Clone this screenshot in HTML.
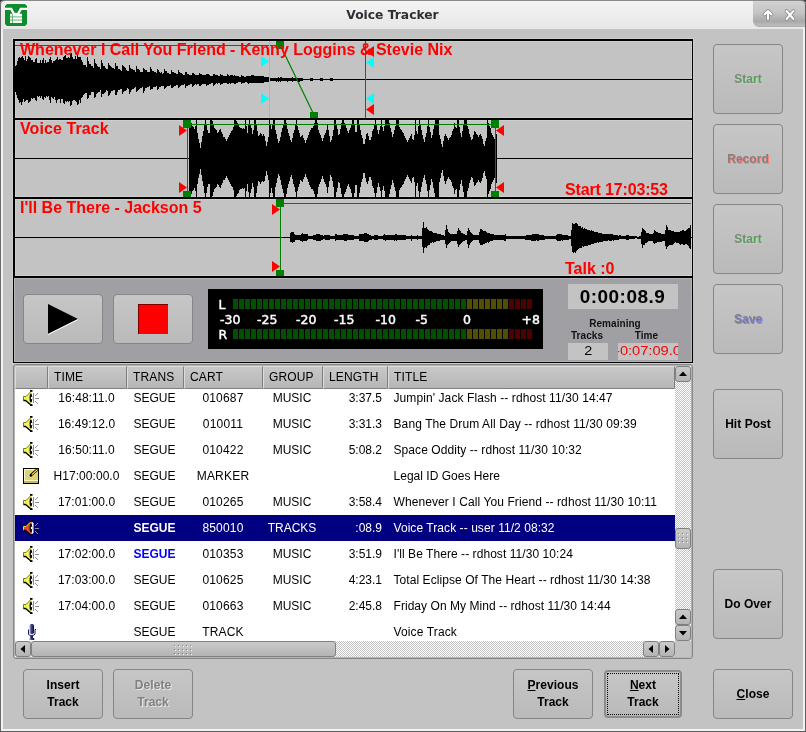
<!DOCTYPE html><html><head><meta charset="utf-8"><title>Voice Tracker</title><style>
*{box-sizing:border-box;margin:0;padding:0}
html,body{width:806px;height:732px;overflow:hidden;background:#c3c3c3;font-family:"Liberation Sans",sans-serif;}
#win{position:absolute;left:0;top:0;width:806px;height:732px;overflow:hidden;will-change:transform}
.abs{position:absolute}
.btn{position:absolute;border:1px solid #868686;border-radius:4px;background:linear-gradient(#c6c6c6,#bababa);display:flex;align-items:center;justify-content:center;text-align:center;font-weight:bold;font-size:12px;line-height:17px;color:#000;letter-spacing:0.05px}
.dis{color:#808080}
.t{position:absolute;white-space:nowrap}
.red{color:#ff0000;font-weight:bold;font-size:16px;line-height:16px}
.row{position:absolute;height:26px;font-size:12px;line-height:26px;color:#000}
.row .t{top:0}
.hd{position:absolute;top:0;height:23px;border:1px solid #7e7e7e;border-top-color:#dcdcdc;border-left-color:#dcdcdc;border-radius:2px;background:linear-gradient(#c8c8c8,#b6b6b6);font-size:12px;line-height:20px;padding-left:5px;letter-spacing:0.15px;color:#000}
.sb{border:1px solid #808080;border-radius:3px;background:linear-gradient(#cacaca,#b4b4b4)}
</style></head><body><div id="win">
<div class="abs" style="left:0;top:0;width:806px;height:29px;background:linear-gradient(#f4f4f4,#ececec 60%,#e6e6e6);"></div>
<div class="abs" style="left:0;top:0;width:806px;height:1px;background:#8a8a8a"></div>
<div class="t" style="left:0;width:785px;top:7px;text-align:center;font-family:'DejaVu Sans',sans-serif;font-weight:bold;font-size:12.3px;line-height:16px;color:#2c3034;letter-spacing:0px">Voice Tracker</div>
<div class="abs" style="left:753px;top:1px;width:52px;height:26px;border-bottom-left-radius:6px;background:linear-gradient(#d2d2d2,#c4c4c4 45%,#a9a9a9 78%,#bcbcbc 96%,#a4a4a4)"></div>
<svg class="abs" style="left:753px;top:1px" width="50" height="26" viewBox="0 0 50 26"><g fill="none" stroke="#8a8a8a" stroke-width="3.6" stroke-linecap="round" stroke-linejoin="round"><path d="M15 18V10.5M11.5 13.5L15 10l3.5 3.5"/><path d="M33.5 10l7 8M40.500 10l-7 8"/></g><g fill="none" stroke="#fff" stroke-width="2" stroke-linecap="round" stroke-linejoin="round"><path d="M15 18V10.5M11.500 13.500L15 10l3.500 3.500"/><path d="M33.500 10l7 8M40.500 10l-7 8"/></g></svg>
<svg class="abs" style="left:0;top:0" width="32" height="30" viewBox="0 0 32 30"><path d="M7 4H25L27 6V24L25 26H7L5 24V6Z" fill="#0e8c2e"/><path d="M5 8.900H11.200L14 14H18L20.800 8.900H27" fill="none" stroke="#fff" stroke-width="2.300"/><rect x="10" y="13.800" width="12" height="9.200" fill="#fff"/><path d="M10 16.900H22M10 20H22M12.400 14V23" stroke="#3aa552" stroke-width="0.800" fill="none"/><path d="M12.300 5H19.700L16 13.300Z" fill="#0e8c2e"/></svg>
<div class="abs" style="left:0;top:3px;width:1px;height:729px;background:#6a6a6a"></div>
<div class="abs" style="left:1px;top:29px;width:2px;height:702px;background:#f2f2f2"></div>
<div class="abs" style="left:803px;top:27px;width:2px;height:704px;background:#f2f2f2"></div>
<div class="abs" style="left:805px;top:3px;width:1px;height:729px;background:#5e5e5e"></div>
<div class="abs" style="left:1px;top:729px;width:804px;height:2px;background:#f2f2f2"></div>
<div class="abs" style="left:0;top:731px;width:806px;height:1px;background:#5e5e5e"></div>
<svg class="abs" style="left:0;top:0" width="806" height="6" viewBox="0 0 806 6"><path d="M0 0H5Q0 0 0 5Z" fill="#3a3a3a"/><path d="M806 0H801Q806 0 806 5Z" fill="#3a3a3a"/><path d="M0.500 5Q0.500 0.500 5 0.500" fill="none" stroke="#777" stroke-width="1"/><path d="M805.500 5Q805.500 0.500 801 0.500" fill="none" stroke="#777" stroke-width="1"/></svg>
<svg class="abs" style="left:0;top:0" width="806" height="290" viewBox="0 0 806 290" shape-rendering="crispEdges">
<rect x="12" y="38" width="682" height="1" fill="#cecece"/>
<rect x="12" y="38" width="1" height="326" fill="#cecece"/>
<rect x="693" y="38" width="1" height="326" fill="#cecece"/>
<rect x="13" y="39" width="680" height="2" fill="#000"/>
<rect x="13" y="118" width="680" height="2" fill="#000"/>
<rect x="13" y="197" width="680" height="2" fill="#000"/>
<rect x="13" y="276" width="680" height="2" fill="#000"/>
<rect x="15" y="41" width="677" height="1" fill="#cecece"/>
<rect x="15" y="117" width="677" height="1" fill="#cecece"/>
<rect x="15" y="120" width="677" height="1" fill="#cecece"/>
<rect x="15" y="196" width="677" height="1" fill="#cecece"/>
<rect x="15" y="199" width="677" height="1" fill="#cecece"/>
<rect x="15" y="275" width="677" height="1" fill="#cecece"/>
<rect x="15" y="41" width="1" height="235" fill="#cecece"/>
<rect x="691" y="41" width="1" height="235" fill="#cecece"/>
<rect x="13" y="39" width="2" height="239" fill="#000"/>
<rect x="692" y="39" width="1" height="239" fill="#000"/>
<rect x="15" y="118" width="677" height="2" fill="#000"/>
<rect x="15" y="197" width="677" height="2" fill="#000"/>
<rect x="15" y="79" width="677" height="1" fill="#000"/>
<rect x="15" y="158" width="677" height="1" fill="#000"/>
<rect x="15" y="237" width="677" height="1" fill="#000"/>
<path d="M15.5 66V92M16.5 65V95M17.5 61V98M18.5 58V100M19.5 57V103M20.5 58V102M21.5 57V105M22.5 56V102M23.5 58V99M24.5 60V102M25.5 56V101M26.5 61V100M27.5 59V100M28.5 56V103M29.5 57V102M30.5 58V101M31.5 60V98M32.5 60V99M33.5 62V98M34.5 62V98M35.5 59V100M36.5 58V101M37.5 63V96M38.5 63V97M39.5 63V96M40.5 60V98M41.5 63V96M42.5 60V99M43.5 58V100M44.5 63V97M45.5 60V98M46.5 63V96M47.5 62V97M48.5 62V96M49.5 59V100M50.5 57V103M51.5 60V97M52.5 63V98M53.5 61V99M54.5 61V97M55.5 60V100M56.5 59V103M57.5 57V100M58.5 60V99M59.5 59V99M60.5 59V103M61.5 60V99M62.5 60V99M63.5 57V103M64.5 56V104M65.5 55V101M66.5 58V102M67.5 58V101M68.5 57V102M69.5 58V101M70.5 54V106M71.5 53V105M72.5 57V101M73.5 59V100M74.5 59V100M75.5 56V101M76.5 59V102M77.5 54V105M78.5 57V104M79.5 57V100M80.5 57V103M81.5 60V98M82.5 62V97M83.5 65V95M84.5 65V94M85.5 65V93M86.5 67V93M87.5 57V99M88.5 61V98M89.5 64V95M90.5 64V95M91.5 66V92M92.5 66V92M93.5 68V92M94.5 59V98M95.5 63V97M96.5 64V94M97.5 66V93M98.5 67V92M99.5 67V92M100.5 69V90M101.5 60V97M102.5 63V94M103.5 66V94M104.5 66V93M105.5 68V92M106.5 69V90M107.5 69V91M108.5 63V96M109.5 65V95M110.5 66V93M111.5 67V91M112.5 68V91M113.5 68V90M114.5 69V90M115.5 63V95M116.5 66V95M117.5 66V92M118.5 69V90M119.5 69V90M120.5 70V89M121.5 71V89M122.5 65V94M123.5 66V92M124.5 67V91M125.5 68V91M126.5 70V90M127.5 71V88M128.5 71V89M129.5 65V94M130.5 68V92M131.5 69V90M132.5 69V89M133.5 70V89M134.5 70V88M135.5 72V87M136.5 66V92M137.5 69V91M138.5 69V90M139.5 70V89M140.5 72V88M141.5 72V88M142.5 72V87M143.5 68V93M144.5 69V91M145.5 70V88M146.5 70V88M147.5 72V87M148.5 72V87M149.5 72V86M150.5 67V90M151.5 69V89M152.5 71V89M153.5 71V87M154.5 72V87M155.5 72V87M156.5 73V86M157.5 69V90M158.5 70V89M159.5 72V87M160.5 73V87M161.5 72V86M162.5 74V86M163.5 73V86M164.5 69V89M165.5 71V88M166.5 71V87M167.5 73V86M168.5 73V86M169.5 74V86M170.5 74V85M171.5 70V88M172.5 72V88M173.5 72V87M174.5 73V86M175.5 73V86M176.5 74V85M177.5 74V85M178.5 70V88M179.5 72V87M180.5 73V86M181.5 73V85M182.5 74V85M183.5 75V85M184.5 75V84M185.5 72V88M186.5 72V86M187.5 74V86M188.5 74V85M189.5 75V85M190.5 75V84M191.5 75V84M192.5 73V87M193.5 73V86M194.5 74V85M195.5 75V84M196.5 75V85M197.5 75V84M198.5 75V84M199.5 73V86M200.5 74V86M201.5 74V85M202.5 75V84M203.5 75V84M204.5 75V84M205.5 75V84M206.5 74V86M207.5 74V85M208.5 74V85M209.5 75V84M210.5 76V84M211.5 76V83M212.5 76V83M213.5 74V86M214.5 74V85M215.5 75V84M216.5 75V83M217.5 75V84M218.5 76V83M219.5 76V83M220.5 74V85M221.5 75V84M222.5 75V84M223.5 76V83M224.5 76V83M225.5 76V83M226.5 76V83M227.5 74V84M228.5 75V84M229.5 76V83M230.5 75V84M231.5 75V83M232.5 75V83M233.5 76V83M234.5 75V84M235.5 76V84M236.5 76V83M237.5 76V83M238.5 76V82M239.5 77V82M240.5 77V82M241.5 75V84M242.5 76V83M243.5 76V83M244.5 77V83M245.5 77V82M246.5 76V82M247.5 76V83M248.5 76V84M249.5 76V83M250.5 76V83M251.5 75V83M252.5 75V83M253.5 75V83M254.5 76V83M255.5 76V83M256.5 76V83M257.5 76V83M258.5 76V83M259.5 76V83M260.5 76V83M261.5 76V83M262.5 76V83M263.5 76V83M264.5 77V82M265.5 77V82M266.5 77V82M267.5 77V82M268.5 77V82M269.5 78V81M270.5 78V81M271.5 78V81M272.5 78V81M273.5 78V81M274.5 78V81M275.5 78V81M276.5 78V82M277.5 78V81M278.5 77V82M279.5 78V81M280.5 77V82M281.5 77V81M282.5 78V81M283.5 78V81M284.5 78V81M285.5 78V81M286.5 78V81M287.5 78V82M288.5 78V81M289.5 78V81M290.5 78V81M291.5 78V81M292.5 77V82M293.5 78V81M294.5 78V81M295.5 78V81M296.5 78V81M297.5 78V81M298.5 78V82M299.5 78V82M300.5 78V81M301.5 78V81M302.5 78V81M310.5 78V81M311.5 78V81M312.5 78V81M320.5 78V81M321.5 78V81M322.5 78V81M330.5 78V81M331.5 78V81M332.5 78V81" stroke="#000" stroke-width="1" fill="none"/>
<path d="M189.5 120V197M190.5 121V196M191.5 123V194M192.5 126V191M193.5 127V190M194.5 129V188M195.5 126V191M196.5 120V197M197.5 133V184M198.5 139V178M199.5 143V174M200.5 148V169M201.5 142V175M202.5 136V181M203.5 131V186M204.5 124V193M205.5 120V197M206.5 124V193M207.5 130V187M208.5 133V184M209.5 133V184M210.5 120V197M211.5 120V197M212.5 121V196M213.5 125V192M214.5 128V189M215.5 129V188M216.5 130V187M217.5 133V184M218.5 132V185M219.5 130V187M220.5 129V188M221.5 132V185M222.5 134V183M223.5 137V180M224.5 137V180M225.5 139V178M226.5 141V176M227.5 139V178M228.5 137V180M229.5 135V182M230.5 133V184M231.5 131V186M232.5 130V187M233.5 127V190M234.5 120V197M235.5 120V197M236.5 121V196M237.5 123V194M238.5 124V193M239.5 127V190M240.5 128V189M241.5 128V189M242.5 129V188M243.5 128V189M244.5 129V188M245.5 120V197M246.5 126V191M247.5 133V184M248.5 125V192M249.5 120V197M250.5 124V193M251.5 128V189M252.5 134V183M253.5 130V187M254.5 120V197M255.5 120V197M256.5 124V193M257.5 131V186M258.5 136V181M259.5 135V182M260.5 133V184M261.5 134V182M262.5 136V181M263.5 134V182M264.5 136V181M265.5 141V176M266.5 146V171M267.5 142V175M268.5 137V180M269.5 120V197M270.5 124V193M271.5 129V188M272.5 124V193M273.5 120V197M274.5 120V197M275.5 130V187M276.5 134V183M277.5 139V178M278.5 143V174M279.5 141V176M280.5 137V180M281.5 132V185M282.5 128V189M283.5 124V193M284.5 120V197M285.5 120V197M286.5 123V194M287.5 129V188M288.5 133V184M289.5 136V181M290.5 140V177M291.5 142V175M292.5 138V179M293.5 133V184M294.5 130V187M295.5 125V192M296.5 120V197M297.5 126V191M298.5 130V187M299.5 133V184M300.5 137V180M301.5 136V181M302.5 135V182M303.5 138V179M304.5 140V177M305.5 143V174M306.5 140V177M307.5 138V179M308.5 135V182M309.5 132V185M310.5 130V187M311.5 128V189M312.5 128V189M313.5 126V191M314.5 123V194M315.5 120V197M316.5 120V197M317.5 123V194M318.5 130V187M319.5 133V184M320.5 135V182M321.5 138V179M322.5 141V176M323.5 138V179M324.5 135V182M325.5 133V184M326.5 130V187M327.5 124V193M328.5 130V187M329.5 136V181M330.5 142V175M331.5 140V177M332.5 136V181M333.5 130V187M334.5 120V197M335.5 120V197M336.5 125V192M337.5 129V188M338.5 135V182M339.5 134V183M340.5 129V188M341.5 123V194M342.5 120V197M343.5 120V197M344.5 123V194M345.5 125V192M346.5 128V189M347.5 131V186M348.5 133V184M349.5 130V187M350.5 128V189M351.5 124V193M352.5 120V197M353.5 120V197M354.5 124V193M355.5 132V185M356.5 132V185M357.5 120V197M358.5 120V197M359.5 124V193M360.5 130V187M361.5 135V182M362.5 138V179M363.5 144V173M364.5 144V173M365.5 139V178M366.5 134V182M367.5 133V184M368.5 136V181M369.5 140V177M370.5 140V177M371.5 137V180M372.5 131V186M373.5 129V188M374.5 124V193M375.5 120V197M376.5 124V193M377.5 130V187M378.5 134V183M379.5 130V187M380.5 126V191M381.5 120V197M382.5 127V190M383.5 131V186M384.5 126V191M385.5 120V197M386.5 120V197M387.5 120V197M388.5 120V197M389.5 123V194M390.5 128V189M391.5 132V185M392.5 137V180M393.5 134V183M394.5 130V187M395.5 126V191M396.5 120V197M397.5 120V197M398.5 120V197M399.5 127V190M400.5 129V188M401.5 130V187M402.5 132V185M403.5 133V184M404.5 136V181M405.5 138V179M406.5 140V177M407.5 142V175M408.5 140V177M409.5 138V179M410.5 136V181M411.5 134V183M412.5 139V178M413.5 140V177M414.5 135V182M415.5 120V197M416.5 131V186M417.5 134V183M418.5 126V191M419.5 120V197M420.5 125V192M421.5 130V187M422.5 135V182M423.5 139V178M424.5 142V175M425.5 137V180M426.5 133V184M427.5 126V191M428.5 120V197M429.5 127V190M430.5 132V185M431.5 138V179M432.5 135V182M433.5 129V188M434.5 124V193M435.5 120V197M436.5 120V197M437.5 120V197M438.5 120V197M439.5 135V182M440.5 139V178M441.5 144V173M442.5 147V170M443.5 141V176M444.5 136V181M445.5 134V184M446.5 136V181M447.5 138V179M448.5 140V177M449.5 138V179M450.5 137V180M451.5 135V182M452.5 131V186M453.5 129V188M454.5 123V194M455.5 127V190M456.5 128V189M457.5 120V197M458.5 120V197M459.5 127V190M460.5 133V184M461.5 137V180M462.5 131V186M463.5 125V192M464.5 120V197M465.5 120V197M466.5 120V197M467.5 126V191M468.5 129V188M469.5 134V183M470.5 137V180M471.5 140V177M472.5 139V178M473.5 135V182M474.5 131V186M475.5 132V185M476.5 134V183M477.5 135V182M478.5 137V180M479.5 135V182M480.5 134V183M481.5 136V181M482.5 139V178M483.5 144V173M484.5 146V171M485.5 141V176M486.5 138V179M487.5 120V197M488.5 123V194M489.5 126V191M490.5 128V189M491.5 133V184M492.5 135V182M493.5 137V180M494.5 139V178M495.5 136V181M496.5 134V183" stroke="#000" stroke-width="1" fill="none"/>
<path d="M290.5 233V242M291.5 232V242M292.5 232V243M293.5 232V242M294.5 234V242M295.5 235V240M296.5 235V240M297.5 235V240M298.5 235V240M299.5 235V240M300.5 235V241M301.5 234V241M302.5 233V242M303.5 234V241M304.5 234V241M305.5 234V241M306.5 234V241M307.5 234V240M308.5 236V239M309.5 236V239M310.5 236V239M311.5 236V239M312.5 236V239M313.5 235V240M314.5 235V240M315.5 235V240M316.5 234V241M317.5 234V241M318.5 234V241M319.5 234V241M320.5 235V241M321.5 235V240M322.5 235V240M323.5 236V239M324.5 235V239M325.5 235V240M326.5 235V240M327.5 235V240M328.5 235V240M329.5 235V240M330.5 236V239M331.5 236V239M332.5 236V239M333.5 236V239M334.5 236V239M335.5 234V241M336.5 234V240M337.5 235V240M338.5 235V240M339.5 235V240M340.5 235V240M341.5 235V240M342.5 235V240M343.5 234V240M344.5 234V241M345.5 234V241M346.5 234V241M347.5 234V240M348.5 235V240M349.5 235V240M350.5 235V240M351.5 235V240M352.5 235V240M353.5 235V240M354.5 236V239M355.5 236V239M356.5 236V239M357.5 236V239M358.5 236V239M359.5 234V241M360.5 234V241M361.5 234V241M362.5 234V241M363.5 234V241M364.5 233V242M365.5 233V242M366.5 233V242M367.5 234V242M368.5 234V241M369.5 235V240M370.5 235V240M371.5 236V240M372.5 236V239M373.5 236V239M374.5 235V240M375.5 235V240M376.5 235V240M377.5 235V240M378.5 236V239M379.5 236V239M380.5 236V239M381.5 236V239M382.5 236V239M383.5 235V240M384.5 234V240M385.5 235V241M386.5 235V240M387.5 235V240M388.5 235V240M389.5 235V240M390.5 235V240M391.5 235V240M392.5 235V240M393.5 235V240M394.5 235V241M395.5 234V240M396.5 234V241M397.5 235V240M398.5 235V240M399.5 235V240M400.5 235V240M401.5 235V240M402.5 235V240M403.5 235V240M404.5 235V240M405.5 235V240M406.5 236V239M407.5 236V239M408.5 236V239M409.5 236V239M410.5 236V239M411.5 235V241M412.5 236V239M413.5 236V239M414.5 236V239M415.5 236V239M416.5 236V239M417.5 235V240M418.5 236V239M419.5 236V239M420.5 236V239M421.5 236V239M422.5 228V247M423.5 222V253M424.5 228V248M425.5 228V247M426.5 227V248M427.5 229V246M428.5 230V245M429.5 231V245M430.5 231V243M431.5 231V243M432.5 232V242M433.5 233V243M434.5 233V242M435.5 233V242M436.5 233V241M437.5 234V241M438.5 234V241M439.5 234V241M440.5 234V240M441.5 235V240M442.5 235V240M443.5 235V240M444.5 236V240M445.5 230V244M446.5 225V248M447.5 229V245M448.5 232V244M449.5 233V243M450.5 234V242M451.5 234V241M452.5 234V241M453.5 234V241M454.5 234V241M455.5 234V241M456.5 234V241M457.5 231V244M458.5 228V247M459.5 230V245M460.5 231V244M461.5 233V243M462.5 233V242M463.5 234V241M464.5 234V241M465.5 235V240M466.5 235V240M467.5 231V244M468.5 228V248M469.5 230V245M470.5 232V243M471.5 233V242M472.5 234V241M473.5 235V240M474.5 235V240M475.5 235V240M476.5 235V240M477.5 235V240M478.5 235V240M479.5 232V243M480.5 229V245M481.5 229V245M482.5 230V245M483.5 231V244M484.5 231V244M485.5 231V243M486.5 232V243M487.5 233V242M488.5 233V243M489.5 233V242M490.5 234V241M491.5 234V241M492.5 234V241M493.5 234V240M494.5 235V240M495.5 235V240M496.5 235V240M497.5 235V240M498.5 235V240M499.5 235V240M500.5 235V240M501.5 235V240M502.5 235V240M503.5 235V240M504.5 235V241M505.5 234V241M506.5 236V239M507.5 236V239M508.5 236V239M509.5 236V239M510.5 236V239M511.5 236V239M512.5 236V239M513.5 236V239M514.5 236V239M515.5 236V239M516.5 236V239M517.5 236V239M518.5 236V239M519.5 236V239M520.5 236V239M521.5 236V239M522.5 236V239M523.5 236V239M524.5 236V239M525.5 236V240M526.5 235V240M527.5 235V240M528.5 235V240M529.5 235V240M530.5 235V240M531.5 235V241M532.5 234V241M533.5 234V241M534.5 234V241M535.5 234V241M536.5 234V240M537.5 234V241M538.5 234V241M539.5 235V240M540.5 235V240M541.5 235V240M542.5 235V240M543.5 235V240M544.5 236V240M545.5 236V239M546.5 236V239M547.5 236V239M548.5 236V239M549.5 236V239M550.5 236V239M551.5 236V239M552.5 236V239M553.5 236V239M554.5 236V239M555.5 236V239M556.5 235V240M557.5 234V241M558.5 234V241M559.5 234V241M560.5 234V241M561.5 234V240M562.5 235V241M563.5 235V240M564.5 235V240M565.5 235V240M566.5 235V240M567.5 235V240M568.5 236V240M569.5 236V239M570.5 236V239M571.5 230V246M572.5 223V252M573.5 224V253M574.5 224V252M575.5 223V253M576.5 223V251M577.5 224V250M578.5 226V249M579.5 226V248M580.5 226V248M581.5 228V248M582.5 227V246M583.5 229V247M584.5 228V246M585.5 229V246M586.5 229V246M587.5 230V246M588.5 230V245M589.5 230V245M590.5 231V245M591.5 230V244M592.5 231V244M593.5 231V244M594.5 232V243M595.5 232V243M596.5 232V243M597.5 232V242M598.5 233V243M599.5 233V242M600.5 233V242M601.5 233V242M602.5 234V242M603.5 234V241M604.5 234V241M605.5 234V241M606.5 234V241M607.5 234V241M608.5 234V240M609.5 234V241M610.5 234V241M611.5 234V241M612.5 234V240M613.5 235V241M614.5 235V240M615.5 235V240M616.5 235V240M617.5 235V240M618.5 236V240M619.5 235V239M620.5 235V239M621.5 236V239M622.5 236V239M623.5 236V239M624.5 236V239M625.5 236V239M626.5 235V240M627.5 235V240M628.5 235V240M629.5 236V239M630.5 236V239M631.5 236V239M632.5 236V239M633.5 236V239M634.5 236V239M635.5 236V238M636.5 236V238M637.5 237V239M638.5 237V239M639.5 236V239M640.5 236V239M641.5 232V244M642.5 228V248M643.5 229V245M644.5 230V245M645.5 231V243M646.5 233V243M647.5 233V242M648.5 233V241M649.5 234V241M650.5 234V241M651.5 234V241M652.5 234V241M653.5 233V243M654.5 230V244M655.5 231V243M656.5 232V243M657.5 232V242M658.5 233V242M659.5 233V242M660.5 233V242M661.5 234V242M662.5 234V241M663.5 234V241M664.5 234V241M665.5 230V246M666.5 225V249M667.5 227V247M668.5 230V246M669.5 230V245M670.5 230V245M671.5 231V245M672.5 231V245M673.5 231V244M674.5 232V243M675.5 232V242M676.5 232V243M677.5 232V243M678.5 232V243M679.5 232V244M680.5 231V245M681.5 231V244M682.5 230V244M683.5 230V245M684.5 231V245M685.5 231V244M686.5 230V244M687.5 229V245M688.5 228V246M689.5 228V248M690.5 225V249" stroke="#000" stroke-width="1" fill="none"/>
<rect x="15" y="45" width="265" height="1" fill="#008000"/>
<path d="M280.5 45.5L314.5 116" fill="none" stroke="#008000" stroke-width="1.2" shape-rendering="geometricPrecision"/>
<rect x="276" y="41" width="8" height="8" fill="#008000"/>
<rect x="310" y="112" width="8" height="6" fill="#008000"/>
<rect x="269" y="41" width="1" height="77" fill="#00ffff"/>
<path d="M261 56L269 61.5L261 67Z" fill="#00ffff" shape-rendering="geometricPrecision"/>
<path d="M261 93L269 98.5L261 104Z" fill="#00ffff" shape-rendering="geometricPrecision"/>
<rect x="365" y="41" width="1" height="77" fill="#ff0000"/>
<path d="M374 57L366 62.5L374 68Z" fill="#00ffff" shape-rendering="geometricPrecision"/>
<path d="M374 93L366 98.5L374 104Z" fill="#00ffff" shape-rendering="geometricPrecision"/>
<path d="M374 46L366 51.5L374 57Z" fill="#ff0000" shape-rendering="geometricPrecision"/>
<path d="M374 104L366 109.5L374 115Z" fill="#ff0000" shape-rendering="geometricPrecision"/>
<rect x="187" y="124" width="309" height="1" fill="#008000"/>
<rect x="187" y="124" width="1" height="72" fill="#008000"/>
<rect x="495" y="124" width="1" height="72" fill="#008000"/>
<rect x="183" y="120" width="8" height="8" fill="#008000"/>
<rect x="183" y="191" width="8" height="6" fill="#008000"/>
<rect x="491" y="120" width="8" height="8" fill="#008000"/>
<rect x="491" y="191" width="8" height="6" fill="#008000"/>
<path d="M179 125L187 130.5L179 136Z" fill="#ff0000" shape-rendering="geometricPrecision"/>
<path d="M179 182L187 187.5L179 193Z" fill="#ff0000" shape-rendering="geometricPrecision"/>
<path d="M504 125L496 130.5L504 136Z" fill="#ff0000" shape-rendering="geometricPrecision"/>
<path d="M504 182L496 187.5L504 193Z" fill="#ff0000" shape-rendering="geometricPrecision"/>
<rect x="280" y="203" width="411" height="1" fill="#008000"/>
<rect x="280" y="203" width="1" height="72" fill="#008000"/>
<rect x="276" y="199" width="8" height="8" fill="#008000"/>
<rect x="276" y="270" width="8" height="6" fill="#008000"/>
<path d="M272 204L280 209.5L272 215Z" fill="#ff0000" shape-rendering="geometricPrecision"/>
<path d="M272 261L280 266.5L272 272Z" fill="#ff0000" shape-rendering="geometricPrecision"/>
</svg>
<div class="t red" id="r1" style="left:20px;top:42px">Whenever I Call You Friend - Kenny Loggins &amp; Stevie Nix</div>
<div class="t red" id="r2" style="left:20px;top:121px;letter-spacing:0.1px">Voice Track</div>
<div class="t red" id="r3" style="left:20px;top:200px">I'll Be There - Jackson 5</div>
<div class="t red" id="r4" style="left:565px;top:182px;letter-spacing:-0.15px">Start 17:03:53</div>
<div class="t red" id="r5" style="left:565px;top:261px">Talk :0</div>
<div class="abs" style="left:13px;top:278px;width:680px;height:85px;background:#a0a0a4;border-left:1px solid #000;border-bottom:1px solid #000;border-right:1px solid #000;box-shadow:inset 1px 1px 0 #b6b6ba,inset -1px -1px 0 #b6b6ba"></div>
<div class="abs" style="left:12px;top:363px;width:682px;height:1px;background:#cecece"></div>
<div class="btn" style="left:23px;top:294px;width:80px;height:50px"><svg width="34" height="34" viewBox="0 0 34 34"><path d="M2 2L32 17L2 32Z" fill="#000"/><path d="M2 32.500L32 17.500" stroke="#fff" stroke-width="1" fill="none"/></svg></div>
<div class="btn" style="left:113px;top:294px;width:80px;height:50px"><div style="width:30px;height:30px;background:#ff0000;box-shadow:inset 1px 1px 0 #7a0000"></div></div>
<svg class="abs" style="left:208px;top:289px" width="335" height="60" viewBox="0 0 335 60"><rect width="335" height="60" fill="#000"/>
<rect x="25" y="10" width="5" height="10" fill="#005000"/><rect x="25" y="40" width="5" height="10" fill="#005000"/>
<rect x="31" y="10" width="5" height="10" fill="#005000"/><rect x="31" y="40" width="5" height="10" fill="#005000"/>
<rect x="37" y="10" width="5" height="10" fill="#005000"/><rect x="37" y="40" width="5" height="10" fill="#005000"/>
<rect x="43" y="10" width="5" height="10" fill="#005000"/><rect x="43" y="40" width="5" height="10" fill="#005000"/>
<rect x="49" y="10" width="5" height="10" fill="#005000"/><rect x="49" y="40" width="5" height="10" fill="#005000"/>
<rect x="55" y="10" width="5" height="10" fill="#005000"/><rect x="55" y="40" width="5" height="10" fill="#005000"/>
<rect x="61" y="10" width="5" height="10" fill="#005000"/><rect x="61" y="40" width="5" height="10" fill="#005000"/>
<rect x="67" y="10" width="5" height="10" fill="#005000"/><rect x="67" y="40" width="5" height="10" fill="#005000"/>
<rect x="73" y="10" width="5" height="10" fill="#005000"/><rect x="73" y="40" width="5" height="10" fill="#005000"/>
<rect x="79" y="10" width="5" height="10" fill="#005000"/><rect x="79" y="40" width="5" height="10" fill="#005000"/>
<rect x="85" y="10" width="5" height="10" fill="#005000"/><rect x="85" y="40" width="5" height="10" fill="#005000"/>
<rect x="91" y="10" width="5" height="10" fill="#005000"/><rect x="91" y="40" width="5" height="10" fill="#005000"/>
<rect x="97" y="10" width="5" height="10" fill="#005000"/><rect x="97" y="40" width="5" height="10" fill="#005000"/>
<rect x="103" y="10" width="5" height="10" fill="#005000"/><rect x="103" y="40" width="5" height="10" fill="#005000"/>
<rect x="109" y="10" width="5" height="10" fill="#005000"/><rect x="109" y="40" width="5" height="10" fill="#005000"/>
<rect x="115" y="10" width="5" height="10" fill="#005000"/><rect x="115" y="40" width="5" height="10" fill="#005000"/>
<rect x="121" y="10" width="5" height="10" fill="#005000"/><rect x="121" y="40" width="5" height="10" fill="#005000"/>
<rect x="127" y="10" width="5" height="10" fill="#005000"/><rect x="127" y="40" width="5" height="10" fill="#005000"/>
<rect x="133" y="10" width="5" height="10" fill="#005000"/><rect x="133" y="40" width="5" height="10" fill="#005000"/>
<rect x="139" y="10" width="5" height="10" fill="#005000"/><rect x="139" y="40" width="5" height="10" fill="#005000"/>
<rect x="145" y="10" width="5" height="10" fill="#005000"/><rect x="145" y="40" width="5" height="10" fill="#005000"/>
<rect x="151" y="10" width="5" height="10" fill="#005000"/><rect x="151" y="40" width="5" height="10" fill="#005000"/>
<rect x="157" y="10" width="5" height="10" fill="#005000"/><rect x="157" y="40" width="5" height="10" fill="#005000"/>
<rect x="163" y="10" width="5" height="10" fill="#005000"/><rect x="163" y="40" width="5" height="10" fill="#005000"/>
<rect x="169" y="10" width="5" height="10" fill="#005000"/><rect x="169" y="40" width="5" height="10" fill="#005000"/>
<rect x="175" y="10" width="5" height="10" fill="#005000"/><rect x="175" y="40" width="5" height="10" fill="#005000"/>
<rect x="181" y="10" width="5" height="10" fill="#005000"/><rect x="181" y="40" width="5" height="10" fill="#005000"/>
<rect x="187" y="10" width="5" height="10" fill="#005000"/><rect x="187" y="40" width="5" height="10" fill="#005000"/>
<rect x="193" y="10" width="5" height="10" fill="#005000"/><rect x="193" y="40" width="5" height="10" fill="#005000"/>
<rect x="199" y="10" width="5" height="10" fill="#005000"/><rect x="199" y="40" width="5" height="10" fill="#005000"/>
<rect x="205" y="10" width="5" height="10" fill="#005000"/><rect x="205" y="40" width="5" height="10" fill="#005000"/>
<rect x="211" y="10" width="5" height="10" fill="#005000"/><rect x="211" y="40" width="5" height="10" fill="#005000"/>
<rect x="217" y="10" width="5" height="10" fill="#005000"/><rect x="217" y="40" width="5" height="10" fill="#005000"/>
<rect x="223" y="10" width="5" height="10" fill="#005000"/><rect x="223" y="40" width="5" height="10" fill="#005000"/>
<rect x="229" y="10" width="5" height="10" fill="#005000"/><rect x="229" y="40" width="5" height="10" fill="#005000"/>
<rect x="235" y="10" width="5" height="10" fill="#005000"/><rect x="235" y="40" width="5" height="10" fill="#005000"/>
<rect x="241" y="10" width="5" height="10" fill="#005000"/><rect x="241" y="40" width="5" height="10" fill="#005000"/>
<rect x="247" y="10" width="5" height="10" fill="#005000"/><rect x="247" y="40" width="5" height="10" fill="#005000"/>
<rect x="253" y="10" width="5" height="10" fill="#005000"/><rect x="253" y="40" width="5" height="10" fill="#005000"/>
<rect x="259" y="10" width="5" height="10" fill="#505000"/><rect x="259" y="40" width="5" height="10" fill="#505000"/>
<rect x="265" y="10" width="5" height="10" fill="#505000"/><rect x="265" y="40" width="5" height="10" fill="#505000"/>
<rect x="271" y="10" width="5" height="10" fill="#505000"/><rect x="271" y="40" width="5" height="10" fill="#505000"/>
<rect x="277" y="10" width="5" height="10" fill="#505000"/><rect x="277" y="40" width="5" height="10" fill="#505000"/>
<rect x="283" y="10" width="5" height="10" fill="#505000"/><rect x="283" y="40" width="5" height="10" fill="#505000"/>
<rect x="289" y="10" width="5" height="10" fill="#505000"/><rect x="289" y="40" width="5" height="10" fill="#505000"/>
<rect x="295" y="10" width="5" height="10" fill="#505000"/><rect x="295" y="40" width="5" height="10" fill="#505000"/>
<rect x="301" y="10" width="5" height="10" fill="#500000"/><rect x="301" y="40" width="5" height="10" fill="#500000"/>
<rect x="307" y="10" width="5" height="10" fill="#500000"/><rect x="307" y="40" width="5" height="10" fill="#500000"/>
<rect x="313" y="10" width="5" height="10" fill="#500000"/><rect x="313" y="40" width="5" height="10" fill="#500000"/>
<rect x="319" y="10" width="5" height="10" fill="#500000"/><rect x="319" y="40" width="5" height="10" fill="#500000"/>
<g fill="#fff" stroke="#fff" stroke-width="0.45" font-family="DejaVu Sans, sans-serif" font-size="12.5">
<text x="10.5" y="20" id="L">L</text><text x="10.5" y="50" id="R">R</text>
<text x="12" y="35" id="m30">-30</text>
<text x="49" y="35" id="m25">-25</text>
<text x="88" y="35" id="m20">-20</text>
<text x="126" y="35" id="m15">-15</text>
<text x="167.5" y="35" id="m10">-10</text>
<text x="207.5" y="35" id="m5">-5</text>
<text x="255" y="35" id="m0">0</text>
<text x="313.5" y="35" id="m8">+8</text>
</g></svg>
<div class="abs" style="left:568px;top:284px;width:110px;height:25px;background:#c3c3c3;text-align:center;font-weight:bold;font-size:19px;line-height:25px;color:#000;letter-spacing:0.45px" id="timer"><span style="position:relative;left:-0.5px">0:00:08.9</span></div>
<div class="t" id="rem" style="left:565px;width:100px;text-align:center;top:318px;line-height:12px;font-weight:bold;font-size:10px;color:#111;letter-spacing:0.05px">Remaining</div>
<div class="t" id="trk" style="left:567px;width:40px;text-align:center;top:329px;line-height:13px;font-weight:bold;font-size:10px;color:#111;letter-spacing:0.05px">Tracks</div>
<div class="t" id="tim" style="left:616px;width:61px;text-align:center;top:329px;line-height:13px;font-weight:bold;font-size:10px;color:#111;letter-spacing:0.05px">Time</div>
<div class="abs" style="left:568px;top:343px;width:40px;height:17px;background:#c3c3c3;text-align:center;font-size:12px;line-height:16px;color:#000"><span id="two" style="display:inline-block;transform:scaleX(1.2)">2</span></div>
<div class="abs" style="left:618px;top:343px;width:60px;height:17px;background:#c3c3c3;overflow:hidden;white-space:nowrap;font-size:12px;line-height:16px;color:#ff0000"><span id="rt" style="display:inline-block;transform-origin:0 50%;transform:scaleX(1.22);margin-left:-3.5px">-0:07:09.0</span></div>
<div class="btn dis" style="left:713px;top:44px;width:70px;height:70px;text-shadow:1px 1px 0 #80ff80">Start</div>
<div class="btn dis" style="left:713px;top:124px;width:70px;height:70px;text-shadow:1px 1px 0 #ff8080">Record</div>
<div class="btn dis" style="left:713px;top:204px;width:70px;height:70px;text-shadow:1px 1px 0 #80ff80">Start</div>
<div class="btn dis" style="left:713px;top:284px;width:70px;height:70px;text-shadow:1px 1px 0 #8080ff">Save</div>
<div class="btn" style="left:713px;top:389px;width:70px;height:70px">Hit Post</div>
<div class="btn" style="left:713px;top:569px;width:70px;height:70px">Do Over</div>
<div class="btn" style="left:713px;top:669px;width:80px;height:50px"><span><u>C</u>lose</span></div>
<div class="btn" style="left:23px;top:669px;width:80px;height:50px">Insert<br>Track</div>
<div class="btn dis" style="left:113px;top:669px;width:80px;height:50px;text-shadow:1px 1px 0 #e8e8e8">Delete<br>Track</div>
<div class="btn" style="left:513px;top:669px;width:80px;height:50px"><span><u>P</u>revious<br>Track</span></div>
<div class="btn" style="left:604px;top:670px;width:78px;height:48px;border:2px solid #8c8c8c;border-radius:4px"><span><u>N</u>ext<br>Track</span><div class="abs" style="left:1px;top:1px;right:1px;bottom:1px;border:1px dotted #000"></div></div>
<div class="abs" style="left:13px;top:364px;width:680px;height:295px;border:1px solid #868686;border-radius:3px;background:#c3c3c3"></div>
<div class="abs" style="left:14px;top:365px;width:678px;height:293px;border:1px solid #b4b4b4;border-radius:2px"></div>
<div class="abs" id="list" style="left:15px;top:366px;width:660px;height:275px;background:#fff;overflow:hidden">
<div class="row" style="left:0;width:660px;top:19px;height:26px;">
<svg class="abs" style="left:8px;top:5px" width="16" height="16" viewBox="0 0 16 16"><path d="M0.500 6.500h2.500L8.500 1v14.500L3 10.500H0.500z" fill="#f2f25a"/><path d="M0.500 10.500V6.500h2.500L8 1.500" fill="none" stroke="#7a7a00" stroke-width="1"/><path d="M0.500 10.500h2L8.500 15.500" fill="none" stroke="#000" stroke-width="1.300"/><path d="M8.500 1.500L10.500 3v10L8.500 14.500z" fill="#fff"/><ellipse cx="7.900" cy="8" rx="1.300" ry="4.600" fill="#000"/><ellipse cx="8.500" cy="8" rx="0.700" ry="1.300" fill="#fff"/><rect x="7" y="0" width="2.500" height="1.800" fill="#000"/><rect x="7" y="14.200" width="2.500" height="1.800" fill="#000"/><path d="M10.500 3v10" stroke="#8c8c8c" stroke-width="1"/><g fill="#909090" shape-rendering="crispEdges"><rect x="12" y="8" width="4" height="1"/><rect x="12" y="5" width="1" height="1"/><rect x="13" y="4" width="1" height="1"/><rect x="14" y="3" width="1" height="1"/><rect x="12" y="11" width="1" height="1"/><rect x="13" y="12" width="1" height="1"/><rect x="14" y="13" width="1" height="1"/></g></svg>
<div class="t" style="left:32px;width:79px;text-align:center;letter-spacing:0.05px">16:48:11.0</div>
<div class="t" style="left:111px;width:57px;text-align:center;">SEGUE</div>
<div class="t" style="left:168px;width:80px;text-align:center;letter-spacing:0.2px">010687</div>
<div class="t" style="left:247px;width:60px;text-align:center">MUSIC</div>
<div class="t" style="right:293px">3:37.5</div>
<div class="t ttl" id="tt0" style="left:378.500px;letter-spacing:0.09px">Jumpin' Jack Flash -- rdhost 11/30 14:47</div>
</div>
<div class="row" style="left:0;width:660px;top:45px;height:26px;">
<svg class="abs" style="left:8px;top:5px" width="16" height="16" viewBox="0 0 16 16"><path d="M0.500 6.500h2.500L8.500 1v14.500L3 10.500H0.500z" fill="#f2f25a"/><path d="M0.500 10.500V6.500h2.500L8 1.500" fill="none" stroke="#7a7a00" stroke-width="1"/><path d="M0.500 10.500h2L8.500 15.500" fill="none" stroke="#000" stroke-width="1.300"/><path d="M8.500 1.500L10.500 3v10L8.500 14.500z" fill="#fff"/><ellipse cx="7.900" cy="8" rx="1.300" ry="4.600" fill="#000"/><ellipse cx="8.500" cy="8" rx="0.700" ry="1.300" fill="#fff"/><rect x="7" y="0" width="2.500" height="1.800" fill="#000"/><rect x="7" y="14.200" width="2.500" height="1.800" fill="#000"/><path d="M10.500 3v10" stroke="#8c8c8c" stroke-width="1"/><g fill="#909090" shape-rendering="crispEdges"><rect x="12" y="8" width="4" height="1"/><rect x="12" y="5" width="1" height="1"/><rect x="13" y="4" width="1" height="1"/><rect x="14" y="3" width="1" height="1"/><rect x="12" y="11" width="1" height="1"/><rect x="13" y="12" width="1" height="1"/><rect x="14" y="13" width="1" height="1"/></g></svg>
<div class="t" style="left:32px;width:79px;text-align:center;letter-spacing:0.05px">16:49:12.0</div>
<div class="t" style="left:111px;width:57px;text-align:center;">SEGUE</div>
<div class="t" style="left:168px;width:80px;text-align:center;letter-spacing:0.2px">010011</div>
<div class="t" style="left:247px;width:60px;text-align:center">MUSIC</div>
<div class="t" style="right:293px">3:31.3</div>
<div class="t ttl" id="tt1" style="left:378.500px;letter-spacing:0.1px">Bang The Drum All Day -- rdhost 11/30 09:39</div>
</div>
<div class="row" style="left:0;width:660px;top:71px;height:26px;">
<svg class="abs" style="left:8px;top:5px" width="16" height="16" viewBox="0 0 16 16"><path d="M0.500 6.500h2.500L8.500 1v14.500L3 10.500H0.500z" fill="#f2f25a"/><path d="M0.500 10.500V6.500h2.500L8 1.500" fill="none" stroke="#7a7a00" stroke-width="1"/><path d="M0.500 10.500h2L8.500 15.500" fill="none" stroke="#000" stroke-width="1.300"/><path d="M8.500 1.500L10.500 3v10L8.500 14.500z" fill="#fff"/><ellipse cx="7.900" cy="8" rx="1.300" ry="4.600" fill="#000"/><ellipse cx="8.500" cy="8" rx="0.700" ry="1.300" fill="#fff"/><rect x="7" y="0" width="2.500" height="1.800" fill="#000"/><rect x="7" y="14.200" width="2.500" height="1.800" fill="#000"/><path d="M10.500 3v10" stroke="#8c8c8c" stroke-width="1"/><g fill="#909090" shape-rendering="crispEdges"><rect x="12" y="8" width="4" height="1"/><rect x="12" y="5" width="1" height="1"/><rect x="13" y="4" width="1" height="1"/><rect x="14" y="3" width="1" height="1"/><rect x="12" y="11" width="1" height="1"/><rect x="13" y="12" width="1" height="1"/><rect x="14" y="13" width="1" height="1"/></g></svg>
<div class="t" style="left:32px;width:79px;text-align:center;letter-spacing:0.05px">16:50:11.0</div>
<div class="t" style="left:111px;width:57px;text-align:center;">SEGUE</div>
<div class="t" style="left:168px;width:80px;text-align:center;letter-spacing:0.2px">010422</div>
<div class="t" style="left:247px;width:60px;text-align:center">MUSIC</div>
<div class="t" style="right:293px">5:08.2</div>
<div class="t ttl" id="tt2" style="left:378.500px;letter-spacing:0.07px">Space Oddity -- rdhost 11/30 10:32</div>
</div>
<div class="row" style="left:0;width:660px;top:97px;height:26px;">
<svg class="abs" style="left:8px;top:5px" width="16" height="16" viewBox="0 0 16 16"><rect x="0.500" y="0.500" width="15" height="15" fill="#dcd47c" stroke="#000"/><path d="M1.500 12V1.500H11" fill="none" stroke="#fbf7cf" stroke-width="1"/><rect x="1" y="12" width="14" height="1" fill="#f6f2c4"/><rect x="1" y="13" width="14" height="2" fill="#c4ba5e"/><path d="M7.500 7.500L14.500 1.500" stroke="#000" stroke-width="2.600"/><path d="M8.800 6.600L14.300 1.800" stroke="#ffe030" stroke-width="1.200"/><circle cx="7.600" cy="7.700" r="1" fill="#000"/></svg>
<div class="t" style="left:32px;width:79px;text-align:center;letter-spacing:0.05px">H17:00:00.0</div>
<div class="t" style="left:111px;width:57px;text-align:center;">SEGUE</div>
<div class="t" style="left:168px;width:80px;text-align:center;letter-spacing:0.2px">MARKER</div>
<div class="t" style="left:247px;width:60px;text-align:center"></div>
<div class="t" style="right:293px"></div>
<div class="t ttl" id="tt3" style="left:378.500px;letter-spacing:0.02px">Legal ID Goes Here</div>
</div>
<div class="row" style="left:0;width:660px;top:123px;height:26px;">
<svg class="abs" style="left:8px;top:5px" width="16" height="16" viewBox="0 0 16 16"><path d="M0.500 6.500h2.500L8.500 1v14.500L3 10.500H0.500z" fill="#f2f25a"/><path d="M0.500 10.500V6.500h2.500L8 1.500" fill="none" stroke="#7a7a00" stroke-width="1"/><path d="M0.500 10.500h2L8.500 15.500" fill="none" stroke="#000" stroke-width="1.300"/><path d="M8.500 1.500L10.500 3v10L8.500 14.500z" fill="#fff"/><ellipse cx="7.900" cy="8" rx="1.300" ry="4.600" fill="#000"/><ellipse cx="8.500" cy="8" rx="0.700" ry="1.300" fill="#fff"/><rect x="7" y="0" width="2.500" height="1.800" fill="#000"/><rect x="7" y="14.200" width="2.500" height="1.800" fill="#000"/><path d="M10.500 3v10" stroke="#8c8c8c" stroke-width="1"/><g fill="#909090" shape-rendering="crispEdges"><rect x="12" y="8" width="4" height="1"/><rect x="12" y="5" width="1" height="1"/><rect x="13" y="4" width="1" height="1"/><rect x="14" y="3" width="1" height="1"/><rect x="12" y="11" width="1" height="1"/><rect x="13" y="12" width="1" height="1"/><rect x="14" y="13" width="1" height="1"/></g></svg>
<div class="t" style="left:32px;width:79px;text-align:center;letter-spacing:0.05px">17:01:00.0</div>
<div class="t" style="left:111px;width:57px;text-align:center;">SEGUE</div>
<div class="t" style="left:168px;width:80px;text-align:center;letter-spacing:0.2px">010265</div>
<div class="t" style="left:247px;width:60px;text-align:center">MUSIC</div>
<div class="t" style="right:293px">3:58.4</div>
<div class="t ttl" id="tt4" style="left:378.500px;letter-spacing:0.093px">Whenever I Call You Friend -- rdhost 11/30 10:11</div>
</div>
<div class="row" style="left:0;width:660px;top:149px;height:26px;background:#000080;color:#fff;">
<svg class="abs" style="left:8px;top:5px" width="16" height="16" viewBox="0 0 16 16"><path d="M0.500 6.500h2.500L8.500 1v14.500L3 10.500H0.500z" fill="#e84a2e"/><path d="M0.500 10.500V6.500h2.500L8 1.500" fill="none" stroke="#e4e400" stroke-width="1"/><path d="M0.500 10.500h2L8.500 15.500" fill="none" stroke="#000" stroke-width="1.300"/><path d="M8.500 1.500L10.500 3v10L8.500 14.500z" fill="#fff"/><ellipse cx="7.900" cy="8" rx="1.300" ry="4.600" fill="#000"/><ellipse cx="8.500" cy="8" rx="0.700" ry="1.300" fill="#fff"/><rect x="7" y="0" width="2.500" height="1.800" fill="#000"/><rect x="7" y="14.200" width="2.500" height="1.800" fill="#000"/><path d="M10.500 3v10" stroke="#8c8c8c" stroke-width="1"/><g fill="#909090" shape-rendering="crispEdges"><rect x="12" y="8" width="4" height="1"/><rect x="12" y="5" width="1" height="1"/><rect x="13" y="4" width="1" height="1"/><rect x="14" y="3" width="1" height="1"/><rect x="12" y="11" width="1" height="1"/><rect x="13" y="12" width="1" height="1"/><rect x="14" y="13" width="1" height="1"/></g></svg>
<div class="t" style="left:111px;width:57px;text-align:center;font-weight:bold;">SEGUE</div>
<div class="t" style="left:168px;width:80px;text-align:center;letter-spacing:0.2px">850010</div>
<div class="t" style="left:247px;width:60px;text-align:center">TRACKS</div>
<div class="t" style="right:293px">:08.9</div>
<div class="t ttl" id="tt5" style="left:378.500px;letter-spacing:0.063px">Voice Track -- user 11/2 08:32</div>
</div>
<div class="row" style="left:0;width:660px;top:175px;height:26px;">
<svg class="abs" style="left:8px;top:5px" width="16" height="16" viewBox="0 0 16 16"><path d="M0.500 6.500h2.500L8.500 1v14.500L3 10.500H0.500z" fill="#f2f25a"/><path d="M0.500 10.500V6.500h2.500L8 1.500" fill="none" stroke="#7a7a00" stroke-width="1"/><path d="M0.500 10.500h2L8.500 15.500" fill="none" stroke="#000" stroke-width="1.300"/><path d="M8.500 1.500L10.500 3v10L8.500 14.500z" fill="#fff"/><ellipse cx="7.900" cy="8" rx="1.300" ry="4.600" fill="#000"/><ellipse cx="8.500" cy="8" rx="0.700" ry="1.300" fill="#fff"/><rect x="7" y="0" width="2.500" height="1.800" fill="#000"/><rect x="7" y="14.200" width="2.500" height="1.800" fill="#000"/><path d="M10.500 3v10" stroke="#8c8c8c" stroke-width="1"/><g fill="#909090" shape-rendering="crispEdges"><rect x="12" y="8" width="4" height="1"/><rect x="12" y="5" width="1" height="1"/><rect x="13" y="4" width="1" height="1"/><rect x="14" y="3" width="1" height="1"/><rect x="12" y="11" width="1" height="1"/><rect x="13" y="12" width="1" height="1"/><rect x="14" y="13" width="1" height="1"/></g></svg>
<div class="t" style="left:32px;width:79px;text-align:center;letter-spacing:0.05px">17:02:00.0</div>
<div class="t" style="left:111px;width:57px;text-align:center;font-weight:bold;color:#0000ff;">SEGUE</div>
<div class="t" style="left:168px;width:80px;text-align:center;letter-spacing:0.2px">010353</div>
<div class="t" style="left:247px;width:60px;text-align:center">MUSIC</div>
<div class="t" style="right:293px">3:51.9</div>
<div class="t ttl" id="tt6" style="left:378.500px;letter-spacing:0.06px">I'll Be There -- rdhost 11/30 10:24</div>
</div>
<div class="row" style="left:0;width:660px;top:201px;height:26px;">
<svg class="abs" style="left:8px;top:5px" width="16" height="16" viewBox="0 0 16 16"><path d="M0.500 6.500h2.500L8.500 1v14.500L3 10.500H0.500z" fill="#f2f25a"/><path d="M0.500 10.500V6.500h2.500L8 1.500" fill="none" stroke="#7a7a00" stroke-width="1"/><path d="M0.500 10.500h2L8.500 15.500" fill="none" stroke="#000" stroke-width="1.300"/><path d="M8.500 1.500L10.500 3v10L8.500 14.500z" fill="#fff"/><ellipse cx="7.900" cy="8" rx="1.300" ry="4.600" fill="#000"/><ellipse cx="8.500" cy="8" rx="0.700" ry="1.300" fill="#fff"/><rect x="7" y="0" width="2.500" height="1.800" fill="#000"/><rect x="7" y="14.200" width="2.500" height="1.800" fill="#000"/><path d="M10.500 3v10" stroke="#8c8c8c" stroke-width="1"/><g fill="#909090" shape-rendering="crispEdges"><rect x="12" y="8" width="4" height="1"/><rect x="12" y="5" width="1" height="1"/><rect x="13" y="4" width="1" height="1"/><rect x="14" y="3" width="1" height="1"/><rect x="12" y="11" width="1" height="1"/><rect x="13" y="12" width="1" height="1"/><rect x="14" y="13" width="1" height="1"/></g></svg>
<div class="t" style="left:32px;width:79px;text-align:center;letter-spacing:0.05px">17:03:00.0</div>
<div class="t" style="left:111px;width:57px;text-align:center;">SEGUE</div>
<div class="t" style="left:168px;width:80px;text-align:center;letter-spacing:0.2px">010625</div>
<div class="t" style="left:247px;width:60px;text-align:center">MUSIC</div>
<div class="t" style="right:293px">4:23.1</div>
<div class="t ttl" id="tt7" style="left:378.500px;letter-spacing:0.07px">Total Eclipse Of The Heart -- rdhost 11/30 14:38</div>
</div>
<div class="row" style="left:0;width:660px;top:227px;height:26px;">
<svg class="abs" style="left:8px;top:5px" width="16" height="16" viewBox="0 0 16 16"><path d="M0.500 6.500h2.500L8.500 1v14.500L3 10.500H0.500z" fill="#f2f25a"/><path d="M0.500 10.500V6.500h2.500L8 1.500" fill="none" stroke="#7a7a00" stroke-width="1"/><path d="M0.500 10.500h2L8.500 15.500" fill="none" stroke="#000" stroke-width="1.300"/><path d="M8.500 1.500L10.500 3v10L8.500 14.500z" fill="#fff"/><ellipse cx="7.900" cy="8" rx="1.300" ry="4.600" fill="#000"/><ellipse cx="8.500" cy="8" rx="0.700" ry="1.300" fill="#fff"/><rect x="7" y="0" width="2.500" height="1.800" fill="#000"/><rect x="7" y="14.200" width="2.500" height="1.800" fill="#000"/><path d="M10.500 3v10" stroke="#8c8c8c" stroke-width="1"/><g fill="#909090" shape-rendering="crispEdges"><rect x="12" y="8" width="4" height="1"/><rect x="12" y="5" width="1" height="1"/><rect x="13" y="4" width="1" height="1"/><rect x="14" y="3" width="1" height="1"/><rect x="12" y="11" width="1" height="1"/><rect x="13" y="12" width="1" height="1"/><rect x="14" y="13" width="1" height="1"/></g></svg>
<div class="t" style="left:32px;width:79px;text-align:center;letter-spacing:0.05px">17:04:00.0</div>
<div class="t" style="left:111px;width:57px;text-align:center;">SEGUE</div>
<div class="t" style="left:168px;width:80px;text-align:center;letter-spacing:0.2px">010663</div>
<div class="t" style="left:247px;width:60px;text-align:center">MUSIC</div>
<div class="t" style="right:293px">2:45.8</div>
<div class="t ttl" id="tt8" style="left:378.500px;letter-spacing:0.05px">Friday On My Mind -- rdhost 11/30 14:44</div>
</div>
<div class="row" style="left:0;width:660px;top:253px;height:26px;">
<svg class="abs" style="left:13px;top:5px" width="8" height="16" viewBox="0 0 8 16"><defs><linearGradient id="mg" x1="0" x2="1" y1="0" y2="0"><stop offset="0" stop-color="#c8c8ea"/><stop offset="0.450" stop-color="#40407e"/><stop offset="1" stop-color="#0c0c44"/></linearGradient></defs><rect x="1.300" y="0" width="4.700" height="10" rx="1.800" fill="url(#mg)"/><path d="M0.500 5.500v4.500q0 1.500 3 1.500t3.500-1.500v-4.500h1" fill="none" stroke="#1c1c5c" stroke-width="1"/><rect x="2.300" y="11.500" width="2.700" height="3" fill="#20205c"/><rect x="1.200" y="14" width="5" height="2" fill="url(#mg)"/></svg>
<div class="t" style="left:111px;width:57px;text-align:center;">SEGUE</div>
<div class="t" style="left:168px;width:80px;text-align:center;letter-spacing:0.2px">TRACK</div>
<div class="t" style="left:247px;width:60px;text-align:center"></div>
<div class="t" style="right:293px"></div>
<div class="t ttl" id="tt9" style="left:378.500px;letter-spacing:0.13px">Voice Track</div>
</div>
<div class="abs" style="left:0;top:0;width:660px;height:23px;background:#b0b0b0"></div>
<div class="hd" style="left:0px;width:33px"></div>
<div class="hd" style="left:33px;width:79px">TIME</div>
<div class="hd" style="left:112px;width:57px">TRANS</div>
<div class="hd" style="left:169px;width:79px">CART</div>
<div class="hd" style="left:248px;width:60px">GROUP</div>
<div class="hd" style="left:308px;width:65px">LENGTH</div>
<div class="hd" style="left:373px;width:287px">TITLE</div>
</div>
<div class="abs" style="left:675px;top:366px;width:16px;height:275px;background:repeating-conic-gradient(#fff 0 25%,#c3c3c3 0 50%) 0 0/2px 2px"></div>
<div class="abs sb" style="left:675px;top:366px;width:16px;height:16px"><svg width="14" height="14" viewBox="1 1 14 14" style="display:block"><path d="M4 10L8 5.500L12 10Z" fill="#000"/></svg></div>
<div class="abs sb" style="left:675px;top:609px;width:16px;height:16px"><svg width="14" height="14" viewBox="1 1 14 14" style="display:block"><path d="M4 10L8 5.500L12 10Z" fill="#000"/></svg></div>
<div class="abs sb" style="left:675px;top:625px;width:16px;height:16px"><svg width="14" height="14" viewBox="1 1 14 14" style="display:block"><path d="M4 6L8 10.500L12 6Z" fill="#000"/></svg></div>
<div class="abs sb" style="left:675px;top:528px;width:16px;height:21px"></div>
<svg class="abs" style="left:678px;top:533px" width="12" height="12" viewBox="0 0 12 12" shape-rendering="crispEdges"><rect x="0" y="0" width="1" height="1" fill="#868686"/><rect x="1" y="1" width="1" height="1" fill="#f4f4f4"/><rect x="0" y="4" width="1" height="1" fill="#868686"/><rect x="1" y="5" width="1" height="1" fill="#f4f4f4"/><rect x="0" y="8" width="1" height="1" fill="#868686"/><rect x="1" y="9" width="1" height="1" fill="#f4f4f4"/><rect x="4" y="0" width="1" height="1" fill="#868686"/><rect x="5" y="1" width="1" height="1" fill="#f4f4f4"/><rect x="4" y="4" width="1" height="1" fill="#868686"/><rect x="5" y="5" width="1" height="1" fill="#f4f4f4"/><rect x="4" y="8" width="1" height="1" fill="#868686"/><rect x="5" y="9" width="1" height="1" fill="#f4f4f4"/><rect x="8" y="0" width="1" height="1" fill="#868686"/><rect x="9" y="1" width="1" height="1" fill="#f4f4f4"/><rect x="8" y="4" width="1" height="1" fill="#868686"/><rect x="9" y="5" width="1" height="1" fill="#f4f4f4"/><rect x="8" y="8" width="1" height="1" fill="#868686"/><rect x="9" y="9" width="1" height="1" fill="#f4f4f4"/></svg>
<div class="abs" style="left:15px;top:641px;width:660px;height:16px;background:repeating-conic-gradient(#fff 0 25%,#c3c3c3 0 50%) 0 0/2px 2px"></div>
<div class="abs sb" style="left:15px;top:641px;width:16px;height:16px"><svg width="14" height="14" viewBox="1 1 14 14" style="display:block"><path d="M10 4L5.500 8L10 12Z" fill="#000"/></svg></div>
<div class="abs sb" style="left:643px;top:641px;width:16px;height:16px"><svg width="14" height="14" viewBox="1 1 14 14" style="display:block"><path d="M10 4L5.500 8L10 12Z" fill="#000"/></svg></div>
<div class="abs sb" style="left:659px;top:641px;width:16px;height:16px"><svg width="14" height="14" viewBox="1 1 14 14" style="display:block"><path d="M6 4L10.500 8L6 12Z" fill="#000"/></svg></div>
<div class="abs sb" style="left:31px;top:641px;width:305px;height:16px"></div>
<svg class="abs" style="left:174px;top:645px" width="20" height="12" viewBox="0 0 20 12" shape-rendering="crispEdges"><rect x="0" y="0" width="1" height="1" fill="#868686"/><rect x="1" y="1" width="1" height="1" fill="#f4f4f4"/><rect x="0" y="4" width="1" height="1" fill="#868686"/><rect x="1" y="5" width="1" height="1" fill="#f4f4f4"/><rect x="0" y="8" width="1" height="1" fill="#868686"/><rect x="1" y="9" width="1" height="1" fill="#f4f4f4"/><rect x="4" y="0" width="1" height="1" fill="#868686"/><rect x="5" y="1" width="1" height="1" fill="#f4f4f4"/><rect x="4" y="4" width="1" height="1" fill="#868686"/><rect x="5" y="5" width="1" height="1" fill="#f4f4f4"/><rect x="4" y="8" width="1" height="1" fill="#868686"/><rect x="5" y="9" width="1" height="1" fill="#f4f4f4"/><rect x="8" y="0" width="1" height="1" fill="#868686"/><rect x="9" y="1" width="1" height="1" fill="#f4f4f4"/><rect x="8" y="4" width="1" height="1" fill="#868686"/><rect x="9" y="5" width="1" height="1" fill="#f4f4f4"/><rect x="8" y="8" width="1" height="1" fill="#868686"/><rect x="9" y="9" width="1" height="1" fill="#f4f4f4"/><rect x="12" y="0" width="1" height="1" fill="#868686"/><rect x="13" y="1" width="1" height="1" fill="#f4f4f4"/><rect x="12" y="4" width="1" height="1" fill="#868686"/><rect x="13" y="5" width="1" height="1" fill="#f4f4f4"/><rect x="12" y="8" width="1" height="1" fill="#868686"/><rect x="13" y="9" width="1" height="1" fill="#f4f4f4"/><rect x="16" y="0" width="1" height="1" fill="#868686"/><rect x="17" y="1" width="1" height="1" fill="#f4f4f4"/><rect x="16" y="4" width="1" height="1" fill="#868686"/><rect x="17" y="5" width="1" height="1" fill="#f4f4f4"/><rect x="16" y="8" width="1" height="1" fill="#868686"/><rect x="17" y="9" width="1" height="1" fill="#f4f4f4"/></svg>
</div></body></html>
